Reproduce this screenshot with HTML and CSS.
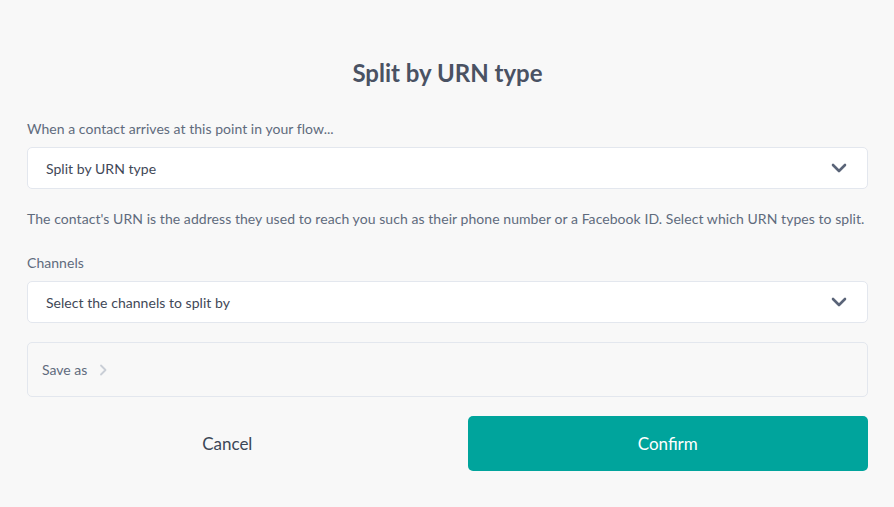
FILE: index.html
```html
<!DOCTYPE html>
<html>
<head>
<meta charset="utf-8">
<link rel="stylesheet" href="styles.css">
</head>
<body>
<div class="dialog">
  <h1 class="title">Split by URN type</h1>
  <div class="label first">When a contact arrives at this point in your flow...</div>
  <div class="select">
    <span class="select-text">Split by URN type</span>
    <svg class="chev" width="16" height="10" viewBox="0 0 16 10"><path d="M2 2 L8 8 L14 2" fill="none" stroke="#5a6478" stroke-width="2.6" stroke-linecap="round" stroke-linejoin="round"/></svg>
  </div>
  <p class="desc">The contact's URN is the address they used to reach you such as their phone number or a Facebook ID. Select which URN types to split.</p>
  <div class="label">Channels</div>
  <div class="select">
    <span class="select-text">Select the channels to split by</span>
    <svg class="chev" width="16" height="10" viewBox="0 0 16 10"><path d="M2 2 L8 8 L14 2" fill="none" stroke="#5a6478" stroke-width="2.6" stroke-linecap="round" stroke-linejoin="round"/></svg>
  </div>
  <div class="saveas">
    <span>Save as</span>
    <svg class="small-chev" width="8" height="12" viewBox="0 0 8 12"><path d="M2 1.5 L6.5 6 L2 10.5" fill="none" stroke="#c9ced6" stroke-width="1.8" stroke-linecap="round" stroke-linejoin="round"/></svg>
  </div>
  <div class="buttons">
    <button class="btn cancel">Cancel</button>
    <button class="btn confirm">Confirm</button>
  </div>
</div>
</body>
</html>
```
FILE: styles.css
```css
html, body {
  margin: 0;
  background: #f8f8f8;
}
body {
  font-family: Lato, "Open Sans", sans-serif;
  color: #5f6b7d;
}
.dialog {
  padding: 58px 26px 0 27px;
}
.title {
  margin: 0;
  text-align: center;
  font-size: 24px;
  line-height: 30px;
  font-weight: 700;
  color: #4a5263;
}
.label {
  font-size: 14px;
  line-height: 18px;
  margin-top: 26px;
  letter-spacing: 0.04px;
  color: #5f6b7d;
}
.label.first {
  margin-top: 32px;
}
.select {
  margin-top: 9px;
  height: 42px;
  box-sizing: border-box;
  background: #fff;
  border: 1px solid #e3e7ee;
  border-radius: 5px;
  display: flex;
  align-items: center;
  justify-content: space-between;
  padding: 0 20px 0 18px;
}
.select-text {
  font-size: 14px;
  letter-spacing: 0.04px;
  color: #3f4857;
}
.chev {
  display: block;
}
.desc {
  margin: 21px 0 0;
  font-size: 14px;
  line-height: 18px;
  letter-spacing: 0.06px;
  color: #5f6b7d;
  white-space: nowrap;
}
.saveas {
  margin-top: 19px;
  height: 55px;
  box-sizing: border-box;
  border: 1px solid #e3e7ee;
  border-radius: 5px;
  display: flex;
  align-items: center;
  gap: 12px;
  padding-left: 14px;
  font-size: 14px;
  color: #5f6b7d;
}
.small-chev {
  display: block;
}
.buttons {
  margin-top: 19px;
  display: grid;
  grid-template-columns: 1fr 1fr;
  column-gap: 40px;
}
.btn {
  height: 55px;
  border: none;
  border-radius: 5px;
  font-family: Lato, "Open Sans", sans-serif;
  font-size: 17px;
  background: transparent;
  cursor: pointer;
}
.cancel {
  color: #3c4656;
}
.confirm {
  background: #00a49c;
  color: #fff;
}
```
